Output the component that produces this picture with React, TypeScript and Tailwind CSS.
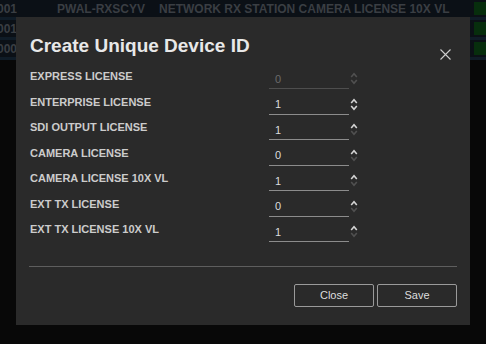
import React from "react";

interface LicenseRow {
  label: string;
  value: number;
  disabled?: boolean;
  focused?: boolean;
}

const licenses: LicenseRow[] = [
  { label: "EXPRESS LICENSE", value: 0, disabled: true },
  { label: "ENTERPRISE LICENSE", value: 1, focused: true },
  { label: "SDI OUTPUT LICENSE", value: 1 },
  { label: "CAMERA LICENSE", value: 0 },
  { label: "CAMERA LICENSE 10X VL", value: 1 },
  { label: "EXT TX LICENSE", value: 0 },
  { label: "EXT TX LICENSE 10X VL", value: 1 },
];

// only the first row's columns are visible past the dialog
const bgRows = [
  { id: "0001", code: "PWAL-RXSCYV", name: "NETWORK RX STATION CAMERA LICENSE 10X VL" },
  { id: "0001", code: "", name: "" },
  { id: "0000", code: "", name: "" },
];

// little up/down arrows next to each number field
const Spinner: React.FC<{ up: boolean; down: boolean }> = ({ up, down }) => (
  <svg width="8" height="13" viewBox="0 0 8 13" className="shrink-0">
    <path d="M1.2 5 L4 1.8 L6.8 5" fill="none" stroke={up ? "#d4d4d4" : "#505050"} strokeWidth="1.6" />
    <path d="M1.2 8 L4 11.2 L6.8 8" fill="none" stroke={down ? "#d4d4d4" : "#505050"} strokeWidth="1.6" />
  </svg>
);

const LicenseField: React.FC<{ row: LicenseRow }> = ({ row }) => (
  <div className="flex h-[25.5px] items-center">
    <div className="w-[240px] pb-[5px] pl-px text-[11px] font-bold text-[#cccccc]">{row.label}</div>
    <div
      className={`flex h-[21px] w-[80px] items-center border-b pl-[6px] pt-px text-[11px] ${
        row.disabled ? "border-[#4e4e4e] text-[#6a6a6a]" : "border-[#8c8c8c] text-[#dcdcdc]"
      }`}
    >
      {row.value}
    </div>
    <div className="ml-px">
      <Spinner up={!row.disabled} down={!!row.focused} />
    </div>
  </div>
);

export default function App() {
  return (
    <div className="relative h-[344px] w-[486px] overflow-hidden bg-[#080808] font-['Liberation_Sans',Arial,sans-serif]">
      {/* table behind the dialog, dimmed by the backdrop */}
      <div className="flex flex-col">
        {bgRows.map((r, i) => (
          <div key={i} className="flex h-[20px] items-start border-b-[3px] border-[#101c27] bg-[#0b1016]">
            <div className="flex h-[17px] flex-1 items-center text-[12px] font-bold text-[#3a3e43]">
              <span className="w-[17px] overflow-hidden whitespace-nowrap text-right [direction:rtl]">{r.id}</span>
              <span className="ml-[40px] w-[102px] whitespace-nowrap">{r.code}</span>
              <span className="whitespace-nowrap">{r.name}</span>
            </div>
            <div className="mt-[2px] h-[13px] w-[12px] bg-[#072e0d]" />
          </div>
        ))}
      </div>

      {/* modal */}
      <div className="absolute left-[16px] top-[17px] flex h-[308px] w-[454px] flex-col bg-[#2a2a2a] px-[13px] pt-[18px]">
        <div className="flex items-start justify-between">
          <h2 className="pl-px text-[19px] font-bold leading-[22px] text-[#e8e8e8]">Create Unique Device ID</h2>
          <svg width="11" height="11" viewBox="0 0 11 11" className="mr-[6px] mt-[14px]">
            <path d="M0.5 0.5 L10.5 10.5 M10.5 0.5 L0.5 10.5" stroke="#cfcfcf" strokeWidth="1.1" />
          </svg>
        </div>

        <div className="mt-[6px] flex flex-col">
          {licenses.map((row) => (
            <LicenseField key={row.label} row={row} />
          ))}
        </div>

        <div className="mt-[21px] h-px bg-[#5e5e5e]" />

        <div className="mt-[17px] flex justify-end gap-[3px]">
          <button className="h-[23px] w-[80px] rounded-[2px] border border-[#9a9a9a] text-[11px] text-[#dddddd]">
            Close
          </button>
          <button className="h-[23px] w-[80px] rounded-[2px] border border-[#9a9a9a] text-[11px] text-[#dddddd]">
            Save
          </button>
        </div>
      </div>
    </div>
  );
}
